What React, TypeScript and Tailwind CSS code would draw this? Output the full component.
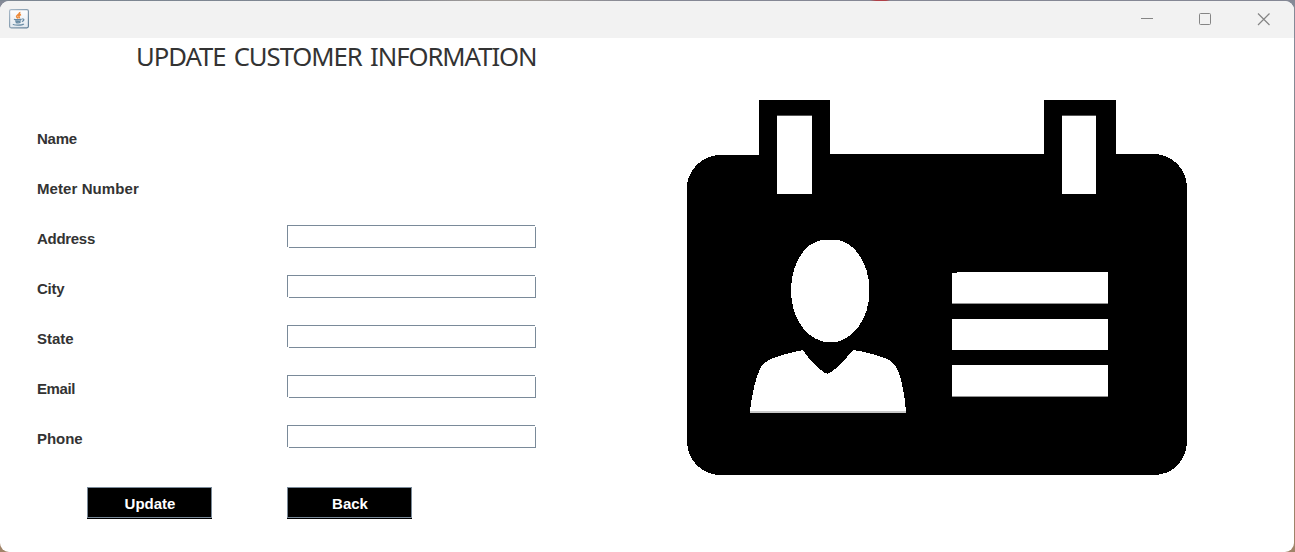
import React from "react";

const readOnly = [
  { name: "Name", tracking: "tracking-[-0.25px]" },
  { name: "Meter Number", tracking: "tracking-[0.08px]" },
];

const editable = [
  { name: "Address", tracking: "tracking-[-0.3px]" },
  { name: "City", tracking: "tracking-[-0.25px]" },
  { name: "State", tracking: "tracking-[-0.05px]" },
  { name: "Email", tracking: "tracking-[-0.4px]" },
  { name: "Phone", tracking: "tracking-[-0.05px]" },
];

function Label({ name, tracking }: { name: string; tracking: string }) {
  return (
    <span className={`w-[250px] shrink-0 text-[15px] leading-[20px] font-bold text-[#333333] ${tracking}`}>
      {name}
    </span>
  );
}

function TextField({ name }: { name: string }) {
  return (
    <div className="relative -mt-[4px] h-[23px] w-[249px]">
      <input
        aria-label={name}
        className="block h-[23px] w-[249px] border border-[#7a8a99] bg-white px-1 text-sm outline-none"
      />
      <span className="absolute top-0 right-0 h-[2px] w-px bg-white" />
      <span className="absolute bottom-0 left-0 h-px w-[2px] bg-white" />
    </div>
  );
}

function Button({ children }: { children: React.ReactNode }) {
  return (
    <button className="h-[32px] w-[125px] bg-black pb-px text-[15px] font-bold text-white">
      <span className="flex h-[31px] items-center justify-center border border-[#7a8a99] pt-[3px] pl-[1px]">
        {children}
      </span>
    </button>
  );
}

function JavaIcon() {
  return (
    <svg width="20" height="20" viewBox="0 0 20 20" fill="none">
      <defs>
        <linearGradient id="frame" x1="0" y1="0" x2="1" y2="1">
          <stop offset="0" stopColor="#a9b9c8" />
          <stop offset="1" stopColor="#5f7e96" />
        </linearGradient>
        <linearGradient id="face" x1="0" y1="0" x2="0" y2="1">
          <stop offset="0" stopColor="#ffffff" />
          <stop offset="1" stopColor="#e1e8ef" />
        </linearGradient>
      </defs>
      <rect x="0.6" y="0.6" width="18.8" height="18.2" rx="1.5" fill="url(#face)" stroke="url(#frame)" strokeWidth="1.2" />
      <path d="M10.7 3C11.5 5 7.4 5.8 7.6 7.5C7.7 8.4 8.8 8.8 9.2 9.4M12 5.5C10.5 6.1 9.5 6.8 10 7.5C10.5 8.1 10.6 8.5 9.9 9.3" stroke="#ed8b3b" strokeWidth="1.6" />
      <path d="M5 10.2C6.3 11 11 10.9 12.6 10.1M6.1 11.8C8 12.5 10.7 12.4 12 11.7M6.7 13.3C8.3 13.9 10.4 13.8 11.5 13.1M13.3 10C15.5 9.7 15.3 12.1 12.9 12.5M4.2 15C4.4 16.5 13 16.4 14.8 14.9" stroke="#688ba4" strokeWidth="1.3" />
    </svg>
  );
}

function IdCard() {
  return (
    <svg className="shrink-0" width="501" height="376" viewBox="687 100 501 376" shapeRendering="crispEdges" aria-hidden="true">
      <path
        fill="#000"
        d="M719 155H759V100H829.5L830 154H1044V100H1116V154H1154C1172 154 1187 169 1187 188V441C1187 460 1173 475 1154 475H720C702 475 687 460 687 441V184C690 169 701 156 719 155Z"
      />
      <g fill="#fff">
        <path d="M777 115H812V194H777ZM1062 115H1096V194H1062Z" />
        <path d="M957 272H1108V303H952V273H957ZM952 319H1108V350H952ZM952 365H1108V396H952Z" />
        <path d="M822 240H838C856 243 869.5 265 869.5 291C869.5 319 852 342.5 830.5 342.5C808 342.5 791 319 791 291C791 264 804 243 822 240Z" />
        <path d="M750 411C752 393 756 376 761 367C765 358 789 353 803 350C809 360 820 370 825 373Q828 374.5 831 372C839 367 847 357 853 350C867 352 882 356 891 361C897 365 901 377 903 389Q905 400 906 411Z" />
      </g>
      <path d="M750 411H906V413H750Z" fill="#c8c8c8" />
      <path d="M952 303H1108V304H952ZM952 396H1108V397H952Z" fill="#929292" />
      <path d="M777 115H812V116H777ZM1062 115H1096V116H1062Z" fill="#555" />
    </svg>
  );
}

export default function App() {
  return (
    <div className="h-[552px] w-[1295px] overflow-hidden bg-[linear-gradient(to_bottom,#858a97_0%,#858a97_12%,#8c8173_45%,#a18469_100%)] font-['Liberation_Sans',Arial,sans-serif]">
      <div className="h-px bg-[linear-gradient(to_right,#7d8792_0px,#7f8693_380px,#a09b98_480px,#a09b98_540px,#858895_640px,#858895_870px,#b04048_876px,#b04048_886px,#858895_890px)]" />
      <div className="h-[551px] w-[1294px] overflow-hidden rounded-[9px] bg-white">
        <header className="flex h-[37px] items-start justify-between bg-[#f2f2f2] pt-2 pr-[24px] pl-[9px]">
          <JavaIcon />
          <svg className="mt-[4px]" width="130" height="13" viewBox="0 0 130 13" fill="none" stroke="#858585">
            <path d="M1 5.5H13" />
            <rect x="59.5" y="0.5" width="11" height="11" rx="1" />
            <path d="M118 0.5L129.5 12M129.5 0.5L118 12" strokeWidth="1.2" />
          </svg>
        </header>
        <main className="flex">
          <section className="w-[687px] shrink-0">
            <h1 className="h-[91px] pt-[2px] pl-[136px] font-['Noto_Sans',sans-serif] text-[25.7px] leading-[34px] tracking-[-1.05px] [word-spacing:2.6px] whitespace-nowrap text-[#333333]">
              UPDATE CUSTOMER INFORMATION
            </h1>
            <form className="pl-[37px]" onSubmit={(e) => e.preventDefault()}>
              {readOnly.map((row) => (
                <div key={row.name} className="flex h-[50px]">
                  <Label {...row} />
                </div>
              ))}
              {editable.map((row) => (
                <div key={row.name} className="flex h-[50px] items-start">
                  <Label {...row} />
                  <TextField name={row.name} />
                </div>
              ))}
              <div className="flex gap-[75px] pt-[8px] pl-[50px]">
                <Button>Update</Button>
                <Button>Back</Button>
              </div>
            </form>
          </section>
          <aside className="pt-[62px]">
            <IdCard />
          </aside>
        </main>
      </div>
    </div>
  );
}
